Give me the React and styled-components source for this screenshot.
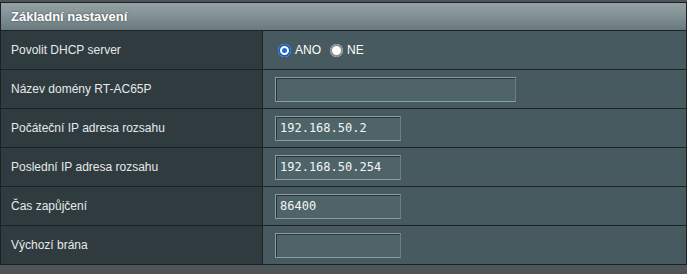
import React from "react";
import styled, { createGlobalStyle } from "styled-components";

const GlobalStyle = createGlobalStyle`
  html, body {
    margin: 0;
    padding: 0;
    background: #4d5558;
  }
  body {
    font-family: "Liberation Sans", Arial, sans-serif;
  }
`;

const Page = styled.div`
  width: 687px;
  height: 274px;
  padding-top: 2px;
  box-sizing: border-box;
  background: #4d5558;
  overflow: hidden;
`;

const Table = styled.div`
  border: 1px solid #1c2224;
  border-bottom: none;
`;

const Header = styled.div`
  height: 27px;
  display: flex;
  align-items: center;
  padding-left: 10px;
  border-bottom: 1px solid #1c2224;
  background: linear-gradient(to bottom, #95a2a5 0%, #7f8e92 55%, #6a797d 100%);
  color: #ffffff;
  font-weight: bold;
  font-size: 13px;
  text-shadow: 0 0 2px #3a4448;
`;

const Row = styled.div`
  display: flex;
  height: 38px;
  border-bottom: 1px solid #1c2224;
`;

const Label = styled.div`
  width: 251px;
  flex: none;
  display: flex;
  align-items: center;
  padding-left: 10px;
  border-right: 1px solid #1c2224;
  background: #2f3b3f;
  color: #e6e9ea;
  font-size: 12px;
`;

const Value = styled.div`
  flex: 1;
  display: flex;
  align-items: center;
  padding-left: 12px;
  background: #475a5f;
  color: #ffffff;
  font-size: 12px;
`;

const TextBox = styled.div`
  width: ${(p) => p.$width}px;
  height: 25px;
  box-sizing: border-box;
  display: flex;
  align-items: center;
  padding-left: 4px;
  background: #4e6468;
  border: 1px solid #8a9da1;
  border-right-color: #6b7e82;
  box-shadow: inset 1px 1px 0 #2a3538;
  font-family: "DejaVu Sans Mono", monospace;
  font-size: 12px;
  color: #f4f6f6;
`;

const RadioGroup = styled.label`
  display: flex;
  align-items: center;
  margin-right: 6px;
  color: #ffffff;
  font-size: 12px;
`;

const RadioDot = styled.span`
  width: 13px;
  height: 13px;
  box-sizing: border-box;
  border-radius: 50%;
  margin: 0 4px 0 3px;
  background: ${(p) => (p.$checked ? "#1d6bd6" : "#ffffff")};
  box-shadow: ${(p) =>
    p.$checked
      ? "inset 0 0 0 2px #1a5cc0, inset 0 0 0 4px #ffffff"
      : "inset 0 0 0 2px #8c8c8c"};
`;

const rows = [
  { label: "Název domény RT-AC65P", value: "", width: 241 },
  { label: "Počáteční IP adresa rozsahu", value: "192.168.50.2", width: 126 },
  { label: "Poslední IP adresa rozsahu", value: "192.168.50.254", width: 126 },
  { label: "Čas zapůjčení", value: "86400", width: 126 },
  { label: "Výchozí brána", value: "", width: 126 },
];

export default function App() {
  return (
    <Page>
      <GlobalStyle />
      <Table>
        <Header>Základní nastavení</Header>
        <Row>
          <Label>Povolit DHCP server</Label>
          <Value>
            <RadioGroup>
              <RadioDot $checked />
              ANO
            </RadioGroup>
            <RadioGroup>
              <RadioDot />
              NE
            </RadioGroup>
          </Value>
        </Row>
        {rows.map((r) => (
          <Row key={r.label}>
            <Label>{r.label}</Label>
            <Value>
              <TextBox $width={r.width}>{r.value}</TextBox>
            </Value>
          </Row>
        ))}
      </Table>
    </Page>
  );
}
